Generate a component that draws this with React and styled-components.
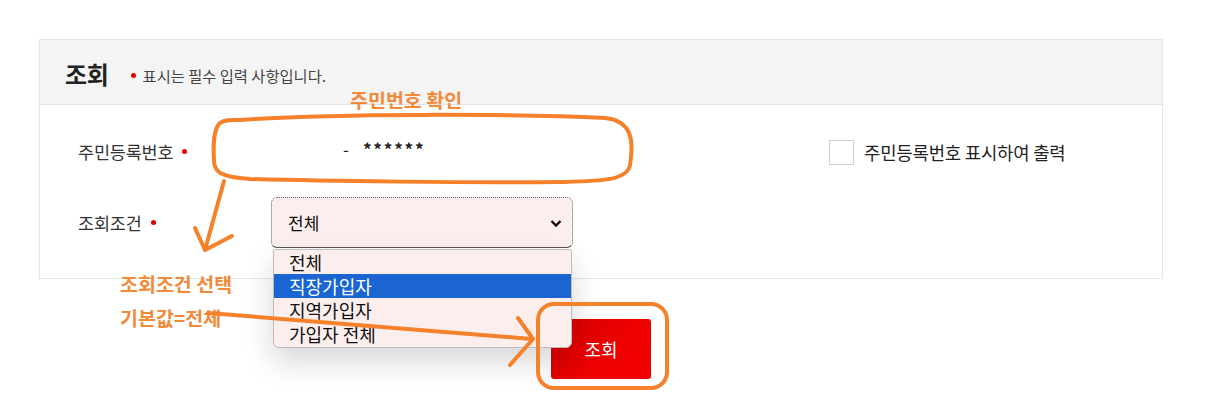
import React from "react"
import styled, { createGlobalStyle } from "styled-components"

const GlobalStyle = createGlobalStyle`
    html, body {
        margin: 0;
        padding: 0;
        background: #fff;
    }
    * {
        box-sizing: border-box;
        font-family: "Noto Sans CJK KR", "Noto Sans", sans-serif;
    }
`

const Page = styled.div`
    position: relative;
    width: 1206px;
    height: 414px;
    padding: 39px 43px 0 39px;
    overflow: hidden;
`

const Panel = styled.section`
    border: 1px solid #e6e6e6;
`

const PanelHeader = styled.header`
    height: 65px;
    background: #f4f4f4;
    border-bottom: 1px solid #e2e2e2;
    display: flex;
    align-items: center;
    padding: 2px 0 0 25px;

    h2 {
        margin: 0 22px 0 0;
        font-size: 24px;
        font-weight: 700;
        color: #222;
        letter-spacing: -0.3px;
    }
`

const Note = styled.p`
    margin: 4px 0 0 0;
    font-size: 15.3px;
    color: #444;
    display: flex;
    align-items: center;
    gap: 7px;
`

const Dot = styled.span`
    display: inline-block;
    width: 5px;
    height: 5px;
    border-radius: 50%;
    background: #e40000;
`

const PanelBody = styled.div`
    padding: 22px 0 30px 38px;
    display: flex;
    flex-direction: column;
    gap: 22px;
`

const Row = styled.div`
    display: grid;
    grid-template-columns: 193px 302px 1fr;
    align-items: center;
    height: ${p => p.$h}px;
`

const Label = styled.label`
    font-size: 17.5px;
    letter-spacing: -0.2px;
    color: #333;
    display: flex;
    align-items: center;
    gap: 9px;
`

const Masked = styled.div`
    font-size: 17px;
    color: #222;
    display: flex;
    align-items: center;
    gap: 14px;
    padding-left: 72px;
    margin-top: -5px;

    b {
        font-weight: 700;
        letter-spacing: 1.8px;
    }
`

const CheckWrap = styled.label`
    display: flex;
    align-items: center;
    gap: 10px;
    padding-left: 256px;
    margin-top: 2px;
    font-size: 17.8px;
    letter-spacing: -0.2px;
    color: #222;
`

const CheckBox = styled.span`
    flex: none;
    width: 25px;
    height: 25px;
    border: 1px solid #cfcfcf;
    background: #fff;
`

const SelectBox = styled.div`
    position: relative;
    height: 51px;
    border-radius: 6px;
    border: 1px dotted #666;
    border-bottom: 1px solid #555;
    background: #fdeeee;
    display: flex;
    align-items: center;
    justify-content: space-between;
    padding: 0 9px 0 16px;
    font-size: 17px;
    color: #111;
`

const DropList = styled.ul`
    position: absolute;
    left: 1px;
    top: 51px;
    width: 299px;
    margin: 0;
    padding: 0 0 1px;
    list-style: none;
    background: #fdeeee;
    border: 1px solid #bdbdbd;
    border-radius: 2px 2px 6px 6px;
    box-shadow: 0 14px 30px rgba(0, 0, 0, 0.16);
    z-index: 2;
`

const Option = styled.li`
    height: 24px;
    line-height: 24px;
    padding-left: 15px;
    font-size: 18px;
    color: ${p => (p.$active ? "#fff" : "#111")};
    background: ${p => (p.$active ? "#1a65d1" : "transparent")};
`

const Actions = styled.div`
    display: flex;
    justify-content: center;
    padding: 40px 0 0 0;
`

const SearchButton = styled.button`
    width: 100px;
    height: 60px;
    border: 0;
    border-radius: 3px;
    background: linear-gradient(135deg, #d50000 0%, #ef0000 60%, #f20000 100%);
    color: #fff;
    font-size: 18px;
`

const Overlay = styled.svg`
    position: absolute;
    left: 0;
    top: 0;
    pointer-events: none;
    z-index: 3;
`

const Memo = styled.span`
    position: absolute;
    left: ${p => p.$x}px;
    top: ${p => p.$y}px;
    font-size: 19.5px;
    font-weight: 700;
    color: #f28a3a;
    white-space: nowrap;
    z-index: 3;
`

const options = ["전체", "직장가입자", "지역가입자", "가입자 전체"]

export default function App() {
    return (
        <Page>
            <GlobalStyle />
            <Panel>
                <PanelHeader>
                    <h2>조회</h2>
                    <Note><Dot />표시는 필수 입력 사항입니다.</Note>
                </PanelHeader>
                <PanelBody>
                    <Row $h={48}>
                        <Label>주민등록번호 <Dot /></Label>
                        <Masked><span>-</span><b>******</b></Masked>
                        <CheckWrap><CheckBox />주민등록번호 표시하여 출력</CheckWrap>
                    </Row>
                    <Row $h={51}>
                        <Label>조회조건 <Dot /></Label>
                        <SelectBox>
                            전체
                            <svg width="14" height="14" viewBox="0 0 14 14">
                                <path d="M2.5 5 L7 9.5 L11.5 5" fill="none" stroke="#111" strokeWidth="2.4" />
                            </svg>
                            <DropList>
                                {options.map((o, i) => (
                                    <Option key={o} $active={i === 1}>{o}</Option>
                                ))}
                            </DropList>
                        </SelectBox>
                    </Row>
                </PanelBody>
            </Panel>
            <Actions>
                <SearchButton>조회</SearchButton>
            </Actions>

            <Memo $x={350} $y={85}>주민번호 확인</Memo>
            <Memo $x={120} $y={269}>조회조건 선택</Memo>
            <Memo $x={120} $y={303}>기본값=전체</Memo>
            <Overlay width="1206" height="414" viewBox="0 0 1206 414">
                <g fill="none" stroke="#f5822a" strokeWidth="4" strokeLinecap="round" strokeLinejoin="round">
                    <path d="M240 120 C 330 113, 520 114, 605 118 C 632 121, 634 140, 630 165 C 627 181, 600 181, 560 182 C 470 183, 320 181, 250 179 C 220 177, 214 172, 214 160 C 213 145, 214 128, 220 123 C 226 119, 232 120, 240 120 Z" />
                    <path d="M224 181 L205 250" />
                    <path d="M195 228 L205 250 L232 236" />
                    <path d="M208 313 L532 339" />
                    <path d="M518 318 L533 339 L510 365" />
                    <rect x="538" y="304" width="129" height="84" rx="16" />
                </g>
            </Overlay>
        </Page>
    )
}
